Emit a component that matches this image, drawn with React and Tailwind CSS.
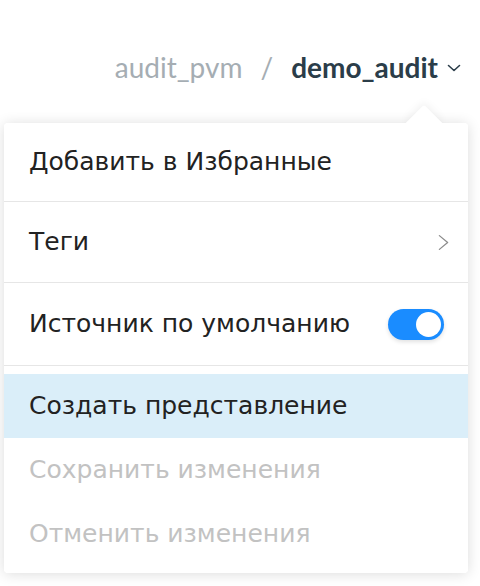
import React, { useState } from "react";

function Chevron({ className }) {
  return (
    <svg viewBox="0 0 16 16" className={className} fill="none" stroke="currentColor" strokeWidth="1.6" strokeLinecap="round" strokeLinejoin="round">
      <path d="M2.5 5.5l5.5 5 5.5-5" />
    </svg>
  );
}

function Arrow() {
  return (
    <svg viewBox="0 0 12 18" className="w-[11px] h-[17px] text-[#8a8a8a]" fill="none" stroke="currentColor" strokeWidth="1.4" strokeLinecap="round" strokeLinejoin="round">
      <path d="M1.5 1.5l9 7.5-9 7.5" />
    </svg>
  );
}

export default function App() {
  const [on, setOn] = useState(true);

  return (
    <div className="w-[480px] h-[586px] bg-white overflow-hidden font-['DejaVu_Sans',sans-serif]">
      {/* breadcrumb */}
      <div className="flex items-center justify-end pt-[50px] pr-[18px] h-[84px] font-['Lato',sans-serif] text-[28px] leading-[34px]">
        <span className="text-[#a5adb3]">audit_pvm</span>
        <span className="text-[#a5adb3] mx-[18px]">/</span>
        <span className="font-bold text-[#2b3d49]">demo_audit</span>
        <Chevron className="w-[16px] h-[16px] ml-[8px] mt-[2px] text-[#2b3d49]" />
      </div>

      {/* menu */}
      <div className="relative ml-1 mt-[39px] w-[464px] bg-white rounded-[4px] shadow-[0_1px_14px_rgba(0,0,0,0.14)]">
        <div className="absolute -top-[13px] left-[407px] w-[26px] h-[26px] rotate-45 bg-white rounded-tl-[3px] shadow-[-2px_-2px_8px_rgba(0,0,0,0.06)]" />
        <div className="relative bg-white rounded-[4px] text-[25px] text-[#222]">
          <div className="h-[79px] flex items-center px-[25px] border-b border-[#e6e6e6]">
            Добавить в Избранные
          </div>
          <div className="h-[81px] flex items-center justify-between px-[25px] border-b border-[#e6e6e6]">
            <span>Теги</span>
            <span className="mr-[-6px]"><Arrow /></span>
          </div>
          <div className="h-[83px] flex items-center justify-between px-[25px] border-b border-[#e6e6e6]">
            <span>Источник по умолчанию</span>
            <button
              onClick={() => setOn(!on)}
              className={`w-[56px] h-[31px] rounded-full flex items-center px-[3px] mr-[-1px] shadow-[0_2px_4px_rgba(0,0,0,0.12)] ${on ? "bg-[#1a8cff] justify-end" : "bg-[#ccc] justify-start"}`}
            >
              <span className="w-[25px] h-[25px] rounded-full bg-white" />
            </button>
          </div>
          <div className="pt-2 pb-[7px]">
            <div className="h-[64px] flex items-center px-[25px] bg-[#daeef9]">Создать представление</div>
            <div className="h-[64px] flex items-center px-[25px] text-[#c2c2c2]">Сохранить изменения</div>
            <div className="h-[64px] flex items-center px-[25px] text-[#c2c2c2]">Отменить изменения</div>
          </div>
        </div>
      </div>
    </div>
  );
}
